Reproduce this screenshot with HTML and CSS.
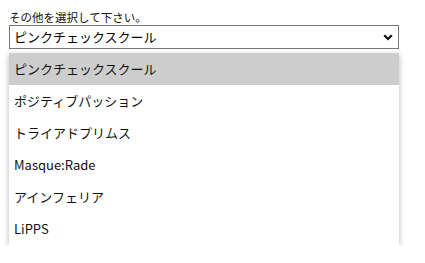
FILE: index.html
```html
<!DOCTYPE html>
<html lang="ja">
<head>
<meta charset="utf-8">
<link rel="stylesheet" href="styles.css">
</head>
<body>
<div class="wrap">
  <div class="label">その他を選択して下さい。</div>
  <div class="select">
    <span class="value">ピンクチェックスクール</span>
    <svg class="chev" width="10" height="7" viewBox="0 0 10 7"><path d="M1.2 1.2 L5 5 L8.8 1.2" fill="none" stroke="#111" stroke-width="2.2"/></svg>
  </div>
  <ul class="menu">
    <li class="opt active">ピンクチェックスクール</li>
    <li class="opt">ポジティブパッション</li>
    <li class="opt">トライアドプリムス</li>
    <li class="opt">Masque:Rade</li>
    <li class="opt">アインフェリア</li>
    <li class="opt">LiPPS</li>
  </ul>
</div>
</body>
</html>
```
FILE: styles.css
```css
html, body {
  margin: 0;
  padding: 0;
  background: #fff;
}
body {
  font-family: "Noto Sans CJK JP", "Noto Sans", sans-serif;
  color: #000;
}
.wrap {
  padding: 9px 0 0 9px;
  width: 390px;
}
.label {
  font-size: 11.5px;
  line-height: 16px;
  height: 16px;
  color: #111;
}
.select {
  box-sizing: border-box;
  height: 24px;
  width: 390px;
  border: 1px solid #767676;
  display: flex;
  align-items: center;
  justify-content: space-between;
  padding: 0 5px 0 4px;
  font-size: 13px;
}
.value {
  line-height: 22px;
}
.chev {
  display: block;
  margin-top: 1px;
}
.menu {
  list-style: none;
  margin: 4px 0 0 0;
  padding: 0;
  width: 390px;
  background: #fff;
  box-shadow: 0 2px 6px rgba(0,0,0,0.28);
}
.opt {
  height: 32px;
  line-height: 32px;
  padding-left: 5px;
  font-size: 13px;
  color: #111;
}
.opt.active {
  background: #cdcdcd;
}
```
